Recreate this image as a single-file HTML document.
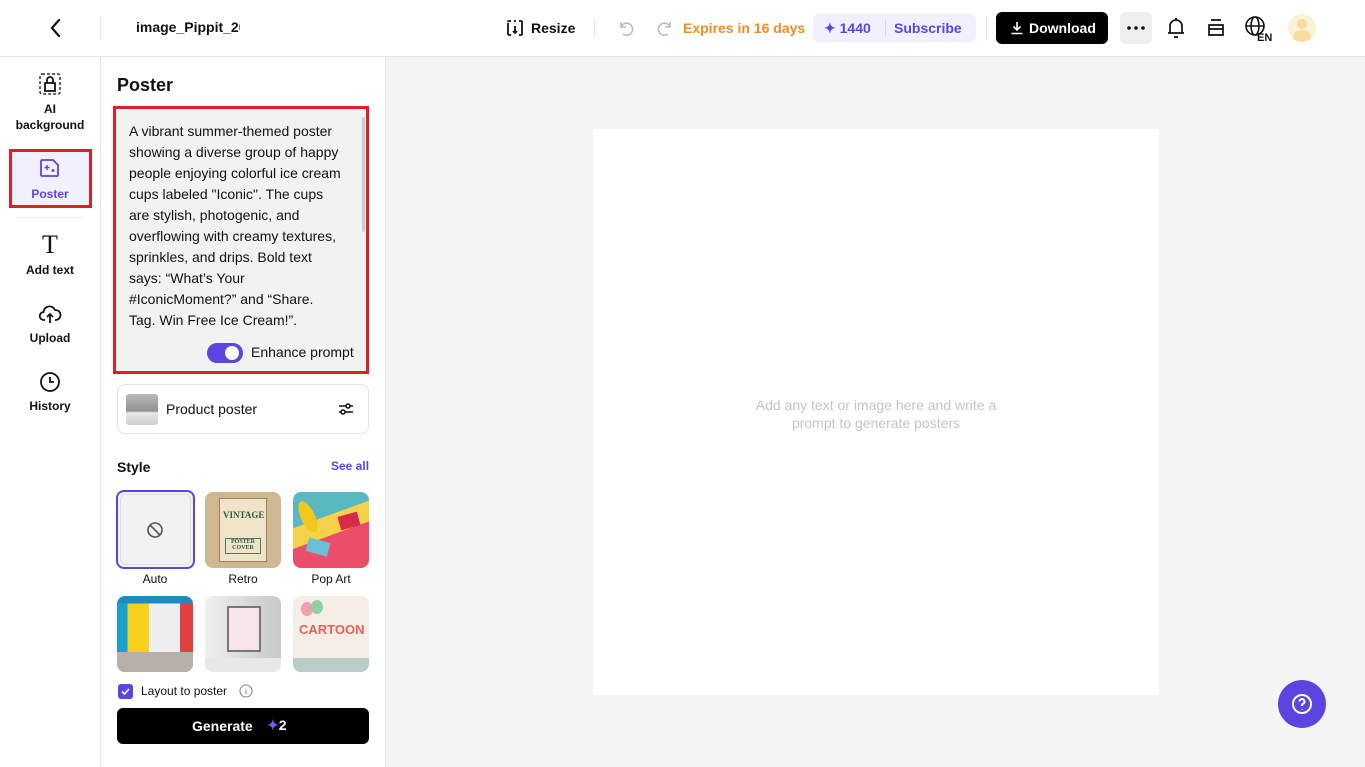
<!DOCTYPE html>
<html><head><meta charset="utf-8"><style>
*{box-sizing:border-box;margin:0;padding:0}
body{width:1365px;height:767px;overflow:hidden;font-family:"Liberation Sans",Arial,sans-serif;background:#fff;color:#111;position:relative}
.abs{position:absolute}
.top{left:0;top:0;width:1365px;height:57px;border-bottom:1px solid #e6e6e6;background:#fff}
.rail{left:0;top:57px;width:101px;height:710px;border-right:1px solid #e6e6e6}
.panel{left:101px;top:57px;width:285px;height:710px;border-right:1px solid #e6e6e6}
.canvas{left:386px;top:57px;width:979px;height:710px;background:#f4f4f4}
.ri{position:absolute;left:0;width:100px;text-align:center;font-size:12px;font-weight:bold;line-height:16px}
.b{font-weight:bold}
.thumb{position:absolute;width:76px;height:76px;border-radius:8px;overflow:hidden}
.lab{position:absolute;width:76px;text-align:center;font-size:12px}
</style></head><body>
<div class="abs top">
  <svg class="abs" style="left:48px;top:18px" width="16" height="20" viewBox="0 0 16 20"><path d="M11 2 L4 10 L11 18" fill="none" stroke="#111" stroke-width="2.2" stroke-linecap="round"/></svg>
  <div class="abs" style="left:100px;top:16px;width:1px;height:24px;background:#e6e6e6"></div>
  <div class="abs b" style="left:136px;top:19px;font-size:14px;width:104px;overflow:hidden;white-space:nowrap">image_Pippit_2025</div>
  <svg class="abs" style="left:505px;top:18px" width="20" height="20" viewBox="0 0 20 20" fill="none" stroke="#111" stroke-width="1.8"><path d="M3 5v12M6 3H4a1 1 0 0 0-1 1M3 17h3M17 3v14M14 17h3M17 3h-3M9 3h2M10 8v7M8 13l2 2 2-2"/></svg>
  <div class="abs b" style="left:531px;top:20px;font-size:14px">Resize</div>
  <div class="abs" style="left:594px;top:19px;width:1px;height:18px;background:#e6e6e6"></div>
  <svg class="abs" style="left:616px;top:18px" width="20" height="20" viewBox="0 0 20 20" fill="none" stroke="#bbb" stroke-width="1.6"><path d="M5 4v5h5M5 9a6 6 0 1 1 2 7"/></svg>
  <svg class="abs" style="left:655px;top:18px" width="20" height="20" viewBox="0 0 20 20" fill="none" stroke="#bbb" stroke-width="1.6"><path d="M15 4v5h-5M15 9a6 6 0 1 0-2 7"/></svg>
  <div class="abs b" style="left:683px;top:20px;font-size:14px;color:#f7891e">Expires in 16 days</div>
  <div class="abs" style="left:813px;top:14px;width:163px;height:28px;background:#f1f0fe;border-radius:6px"></div>
  <div class="abs b" style="left:824px;top:20px;font-size:14px;color:#5b45e0">✦ 1440</div>
  <div class="abs" style="left:885px;top:20px;width:1px;height:16px;background:#d6d2f5"></div>
  <div class="abs b" style="left:894px;top:20px;font-size:14px;color:#5b45e0">Subscribe</div>
  <div class="abs" style="left:986px;top:16px;width:1px;height:24px;background:#e6e6e6"></div>
  <div class="abs" style="left:996px;top:12px;width:112px;height:32px;background:#000;border-radius:6px"></div>
  <svg class="abs" style="left:1010px;top:21px" width="14" height="14" viewBox="0 0 14 14" fill="none" stroke="#fff" stroke-width="1.6"><path d="M7 1v8M3.5 5.5 7 9l3.5-3.5M1.5 12.5h11"/></svg>
  <div class="abs b" style="left:1029px;top:20px;font-size:14px;color:#fff">Download</div>
  <div class="abs" style="left:1120px;top:12px;width:32px;height:32px;background:#efefef;border-radius:6px"></div>
  <svg class="abs" style="left:1126px;top:26px" width="20" height="4" viewBox="0 0 20 4" fill="#111"><circle cx="3" cy="2" r="1.8"/><circle cx="10" cy="2" r="1.8"/><circle cx="17" cy="2" r="1.8"/></svg>
  <svg class="abs" style="left:1166px;top:16px" width="20" height="24" viewBox="0 0 20 24" fill="none" stroke="#111" stroke-width="1.7"><path d="M4 17V10a6 6 0 0 1 12 0v7M2 17h16M8 21h4M10 2v2"/></svg>
  <svg class="abs" style="left:1206px;top:17px" width="20" height="22" viewBox="0 0 20 22" fill="none" stroke="#111" stroke-width="1.7"><path d="M5 3h10M3 8h14v10H3zM3 12h14"/></svg>
  <svg class="abs" style="left:1244px;top:15px" width="32" height="28" viewBox="0 0 32 28" fill="none" stroke="#111" stroke-width="1.6"><circle cx="11" cy="11" r="9"/><ellipse cx="11" cy="11" rx="4" ry="9"/><path d="M2 11h18"/><text x="13" y="26" font-family="Liberation Sans" font-weight="bold" font-size="11" fill="#111" stroke="none">EN</text></svg>
  <div class="abs" style="left:1288px;top:14px;width:28px;height:28px;border-radius:50%;background:#fdf1d8;overflow:hidden"><div class="abs" style="left:9px;top:5px;width:10px;height:10px;border-radius:50%;background:#f8dca0"></div><div class="abs" style="left:5px;top:16px;width:18px;height:14px;border-radius:50%;background:#f8dca0"></div></div>
</div>

<div class="abs rail">
  <svg class="abs" style="left:39px;top:16px" width="22" height="22" viewBox="0 0 22 22" fill="none" stroke="#333" stroke-width="1.5"><rect x="1" y="1" width="20" height="20" rx="2" stroke-dasharray="3 2"/><path d="M6 18V10h10v8zM8 10V7a3 3 0 0 1 6 0v3" stroke="#111" stroke-width="1.8"/></svg>
  <div class="ri" style="top:44px">AI<br>background</div>
  <div class="abs" style="left:9px;top:92px;width:83px;height:59px;border:3px solid #e01e26;background:#f1f0fe"></div>
  <svg class="abs" style="left:39px;top:101px" width="22" height="20" viewBox="0 0 22 20" fill="none" stroke="#5b45e0" stroke-width="1.8"><path d="M3 2h11l5 5v10a1 1 0 0 1-1 1H3a1 1 0 0 1-1-1V3a1 1 0 0 1 1-1z"/><path d="M8 7v5M5.5 9.5h5M14 11v3M12.5 12.5h3" stroke-width="1.5"/></svg>
  <div class="ri" style="top:129px;color:#5b45e0">Poster</div>
  <div class="abs" style="left:18px;top:160px;width:64px;height:1px;background:#e6e6e6"></div>
  <div class="abs" style="left:38px;top:175px;width:24px;font-family:'Liberation Serif',serif;font-size:26px;text-align:center;line-height:26px">T</div>
  <div class="ri" style="top:205px">Add text</div>
  <svg class="abs" style="left:38px;top:246px" width="24" height="22" viewBox="0 0 24 22" fill="none" stroke="#111" stroke-width="1.8"><path d="M7 17H6a4 4 0 0 1-.5-8A6 6 0 0 1 17 7a4.5 4.5 0 0 1 1 10h-1M12 20v-9M9 14l3-3 3 3"/></svg>
  <div class="ri" style="top:273px">Upload</div>
  <svg class="abs" style="left:39px;top:314px" width="22" height="22" viewBox="0 0 22 22" fill="none" stroke="#111" stroke-width="1.8"><circle cx="11" cy="11" r="9"/><path d="M11 6v5h4"/></svg>
  <div class="ri" style="top:341px">History</div>
</div>

<div class="abs panel">
  <div class="abs b" style="left:16px;top:18px;font-size:18px">Poster</div>
  <div class="abs" style="left:12px;top:49px;width:256px;height:268px;border:3px solid #e01e26;background:#f2f2f2"></div>
  <div class="abs" style="left:261px;top:60px;width:3px;height:115px;background:#ccc;border-radius:2px"></div>
  <div class="abs" style="left:28px;top:64px;width:232px;font-size:14px;line-height:21px;color:#111;white-space:nowrap">A vibrant summer-themed poster<br>showing a diverse group of happy<br>people enjoying colorful ice cream<br>cups labeled "Iconic". The cups<br>are stylish, photogenic, and<br>overflowing with creamy textures,<br>sprinkles, and drips. Bold text<br>says: “What’s Your<br>#IconicMoment?” and “Share.<br>Tag. Win Free Ice Cream!”.</div>
  <div class="abs" style="left:106px;top:286px;width:36px;height:20px;border-radius:10px;background:#5b45e0"></div>
  <div class="abs" style="left:124px;top:289px;width:14px;height:14px;border-radius:50%;background:#fff"></div>
  <div class="abs" style="left:150px;top:287px;font-size:14px">Enhance prompt</div>
  <div class="abs" style="left:16px;top:327px;width:252px;height:50px;border:1px solid #e3e3e3;border-radius:8px"></div>
  <div class="abs" style="left:25px;top:337px;width:32px;height:31px;border-radius:3px;background:linear-gradient(#b9bcbd,#8f9290 55%,#e8e8e4 60%,#cfcfca)"></div>
  <div class="abs" style="left:65px;top:344px;font-size:14px">Product poster</div>
  <svg class="abs" style="left:236px;top:344px" width="18" height="16" viewBox="0 0 18 16" fill="none" stroke="#111" stroke-width="1.5"><path d="M2 5h14M2 11h14"/><circle cx="11" cy="5" r="2" fill="#fff"/><circle cx="6" cy="11" r="2" fill="#fff"/></svg>
  <div class="abs b" style="left:16px;top:402px;font-size:14px">Style</div>
  <div class="abs b" style="left:230px;top:402px;font-size:12px;color:#5b45e0">See all</div>

  <div class="thumb" style="left:15px;top:433px;width:79px;height:79px;border:2px solid #5b45e0;background:#f2f2f2;padding:2px"><div style="width:100%;height:100%;border:1px solid #ddd;border-radius:6px"></div></div>
  <svg class="abs" style="left:45px;top:464px" width="18" height="18" viewBox="0 0 18 18" fill="none" stroke="#555" stroke-width="1.6"><circle cx="9" cy="9" r="7"/><path d="M4 4l10 10"/></svg>
  <div class="lab" style="left:16px;top:515px">Auto</div>
  <div class="thumb" style="left:104px;top:435px;background:#cdb892"><div class="abs" style="left:14px;top:6px;width:48px;height:64px;background:#efe3c8;border:1px solid #a08060"></div><div class="abs" style="left:18px;top:18px;width:40px;font:bold 9px 'Liberation Serif',serif;color:#2c5a4a;text-align:center">VINTAGE</div><div class="abs" style="left:20px;top:46px;width:36px;height:16px;border:1px solid #4a7a66;font:bold 6px 'Liberation Serif';color:#2c5a4a;text-align:center">POSTER COVER</div></div>
  <div class="lab" style="left:104px;top:515px">Retro</div>
  <div class="thumb" style="left:192px;top:435px;background:linear-gradient(160deg,#5ab8c0 0 35%,#f6d24a 35% 55%,#ea4e6a 55%)"><div class="abs" style="left:8px;top:8px;width:14px;height:34px;border-radius:50%;background:#f2c81c;transform:rotate(-25deg)"></div><div class="abs" style="left:46px;top:22px;width:20px;height:14px;background:#d82a4a;transform:rotate(-15deg)"></div><div class="abs" style="left:14px;top:48px;width:22px;height:14px;background:#6bc0d4;transform:rotate(15deg)"></div></div>
  <div class="lab" style="left:192px;top:515px">Pop Art</div>
  <div class="thumb" style="left:16px;top:539px;background:linear-gradient(#1a8cc0 0 10%,transparent 10%),linear-gradient(90deg,#1aa0d0 0 14%,#f7d11c 14% 42%,#eee 42% 83%,#e04040 83%)"><div class="abs" style="left:0;top:56px;width:76px;height:20px;background:#b8b0a8"></div></div>
  <div class="thumb" style="left:104px;top:539px;background:linear-gradient(90deg,#f0f0f0,#c8c8c8)"><div class="abs" style="left:22px;top:10px;width:34px;height:46px;background:#f7e4e6;border:2px solid #777"></div><div class="abs" style="left:0;top:62px;width:76px;height:14px;background:#e8e8e8"></div></div>
  <div class="thumb" style="left:192px;top:539px;background:#f5eee6"><div class="abs" style="left:6px;top:26px;font:bold 13px 'Liberation Sans';color:#e9605a">CARTOON</div><div class="abs" style="left:8px;top:6px;width:12px;height:14px;border-radius:50%;background:#f1a0b0"></div><div class="abs" style="left:18px;top:4px;width:12px;height:14px;border-radius:50%;background:#8fcfa0"></div><div class="abs" style="left:0;top:62px;width:76px;height:14px;background:#b8ccc8"></div></div>

  <div class="abs" style="left:17px;top:627px;width:15px;height:15px;border-radius:3px;background:#5b45e0"></div>
  <svg class="abs" style="left:19px;top:629px" width="11" height="11" viewBox="0 0 11 11" fill="none" stroke="#fff" stroke-width="1.6"><path d="M2 5.5l2.5 2.5L9 3"/></svg>
  <div class="abs" style="left:40px;top:627px;font-size:12px">Layout to poster</div>
  <svg class="abs" style="left:138px;top:627px" width="14" height="14" viewBox="0 0 14 14" fill="none" stroke="#888" stroke-width="1.1"><circle cx="7" cy="7" r="6"/><path d="M7 6v4M7 4v.5"/></svg>
  <div class="abs" style="left:16px;top:651px;width:252px;height:36px;background:#000;border-radius:6px"></div>
  <div class="abs b" style="left:91px;top:661px;font-size:14px;color:#fff">Generate</div>
  <div class="abs b" style="left:166px;top:660px;font-size:14px;color:#fff"><span style="color:#7b5cf0">✦</span>2</div>
</div>

<div class="abs canvas">
  <div class="abs" style="left:207px;top:72px;width:566px;height:566px;background:#fff"></div>
  <div class="abs" style="left:360px;top:339px;width:260px;text-align:center;font-size:14px;line-height:18px;color:#c4c4c4">Add any text or image here and write a prompt to generate posters</div>
  <div class="abs" style="left:892px;top:623px;width:48px;height:48px;border-radius:50%;background:#5b45e0"></div>
  <svg class="abs" style="left:904px;top:635px" width="24" height="24" viewBox="0 0 24 24" fill="none" stroke="#fff" stroke-width="2"><circle cx="12" cy="12" r="9"/><path d="M9.5 9.5a2.5 2.5 0 1 1 3.5 2.3c-.7.3-1 .8-1 1.5V14M12 17v.5"/></svg>
</div>
</body></html>
